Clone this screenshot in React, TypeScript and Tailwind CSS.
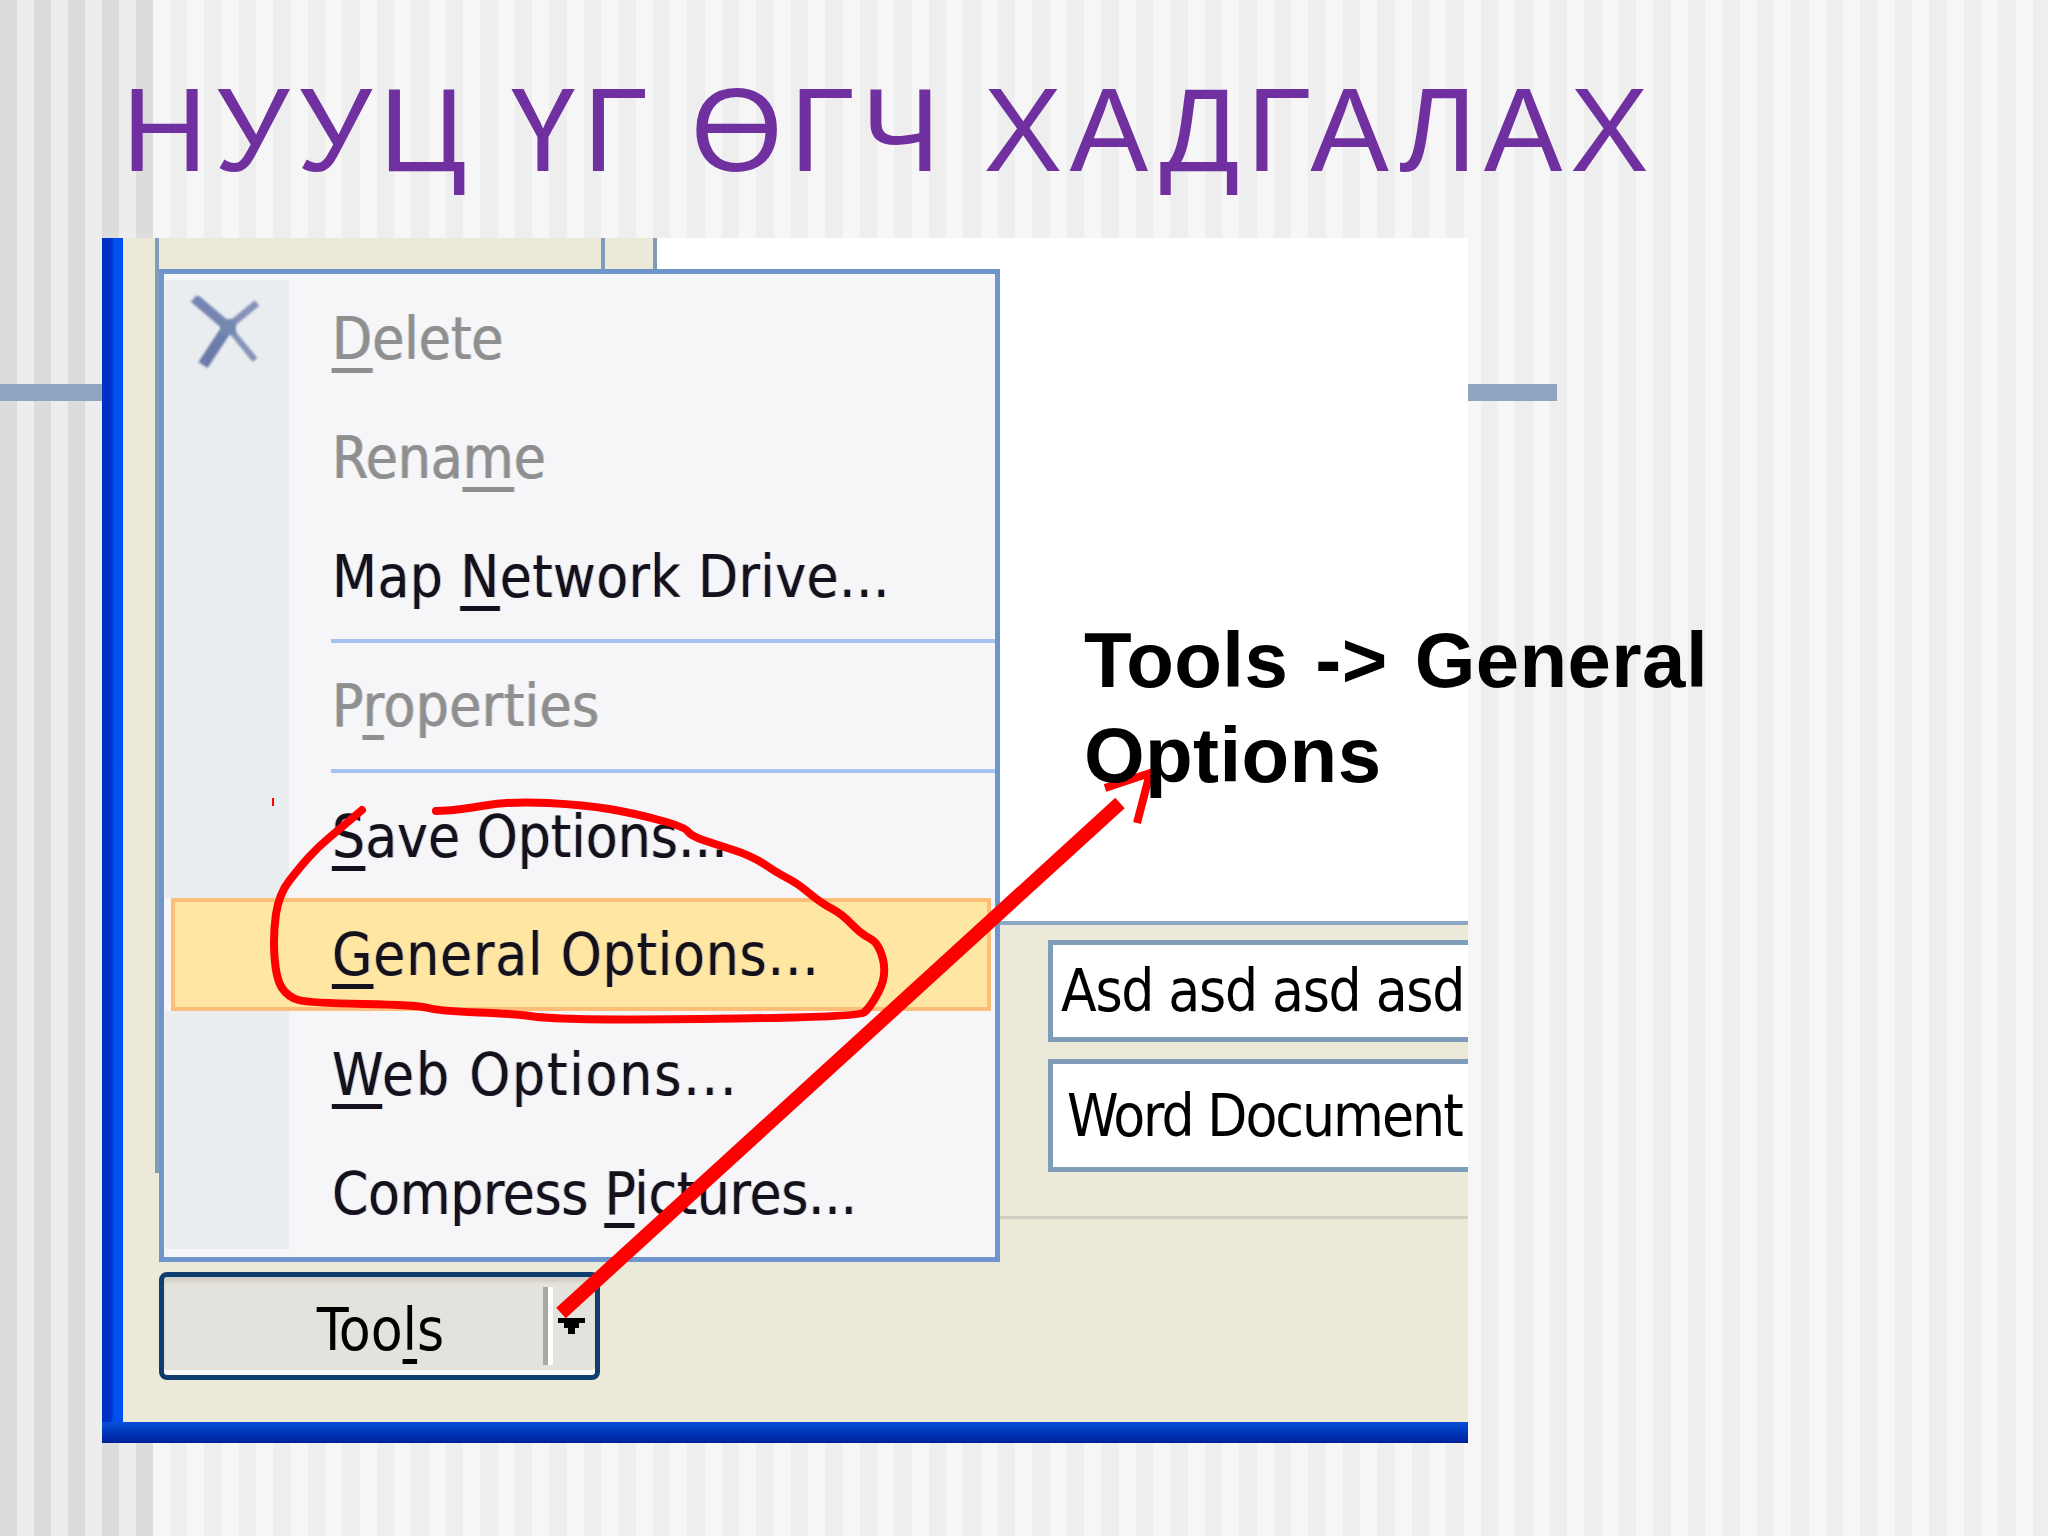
import React from 'react';

const TAHOMA = 'font-["DejaVu_Sans_Condensed","Noto_Sans",sans-serif]';
const FRINGE = '[text-shadow:-1px_0_0_#c08a4a70,1px_0_0_#3a7ac870]';
const ACCESS_KEY = 'underline decoration-[5px] underline-offset-[9px] [text-decoration-skip-ink:none]';

interface MenuRow {
  before: string;
  key_: string;
  after: string;
  height: string;
  tracking?: string;
  disabled?: boolean;
  icon?: boolean;
}

const Label: React.FC<{ row: MenuRow }> = ({ row }) => (
  <span
    className={`${TAHOMA} ${FRINGE} ${row.tracking ?? ''} text-[58px] leading-none whitespace-nowrap ${row.disabled ? 'text-[#8f8f8f]' : 'text-[#14101c]'}`}
  >
    {row.before}
    <span className={ACCESS_KEY}>{row.key_}</span>
    {row.after}
  </span>
);

const DeleteIcon = () => (
  <svg width="72" height="76" viewBox="0 0 72 76" className="mt-[16px] blur-[0.8px]" fill="none">
    <path d="M3 2L37 31" stroke="#7686b2" strokeWidth="10" />
    <path d="M12 69L37 31" stroke="#6b7cab" strokeWidth="11" />
    <path d="M66 7L37 31" stroke="#8693b8" strokeWidth="7" />
    <path d="M64 64L37 31" stroke="#8693b8" strokeWidth="6" />
    <rect x="29" y="23" width="16" height="16" fill="#7488b0" />
  </svg>
);

const Row: React.FC<{ row: MenuRow }> = ({ row }) => (
  <div className={`flex ${row.height}`}>
    <div className="w-[124px] shrink-0 bg-[#e9edf0] flex items-start justify-center">
      {row.icon && <DeleteIcon />}
    </div>
    <div className="flex-1 flex items-center pl-[43px]">
      <Label row={row} />
    </div>
  </div>
);

const Separator = ({ height }: { height: string }) => (
  <div className={`flex ${height}`}>
    <div className="w-[124px] shrink-0 bg-[#e9edf0]" />
    <div className="flex-1 flex items-center pl-[42px]">
      <div className="w-full h-[4px] bg-[#a5c3ef]" />
    </div>
  </div>
);

const Menu = () => (
  <div className="w-[841px] h-[993px] border-[5px] border-[#6f96cc] bg-[#f6f6f8] pt-[6px] pl-[1px]">
    <Row row={{ before: '', key_: 'D', after: 'elete', disabled: true, icon: true, height: 'h-[118px]' }} />
    <Row row={{ before: 'Rena', key_: 'm', after: 'e', disabled: true, height: 'h-[119px]' }} />
    <Row row={{ before: 'Map ', key_: 'N', after: 'etwork Drive...', tracking: 'tracking-[0.4px]', height: 'h-[119px]' }} />
    <Separator height="h-[9px]" />
    <Row row={{ before: 'P', key_: 'r', after: 'operties', tracking: 'tracking-[0.4px]', disabled: true, height: 'h-[121px]' }} />
    <Separator height="h-[9px]" />
    <Row row={{ before: '', key_: 'S', after: 'ave Options...', height: 'h-[123px]' }} />
    <div className="h-[113px] ml-[6px] mr-[4px] border-[4px] border-[#ffbe78] bg-[#ffe6a2] flex items-center pl-[157px]">
      <Label row={{ before: '', key_: 'G', after: 'eneral Options...', tracking: 'tracking-[0.8px]', height: '' }} />
    </div>
    <Row row={{ before: '', key_: 'W', after: 'eb Options...', tracking: 'tracking-[1.8px]', height: 'h-[128px]' }} />
    <Row row={{ before: 'Compress ', key_: 'P', after: 'ictures...', tracking: 'tracking-[-0.35px]', height: 'h-[110px]' }} />
  </div>
);

const ToolsButton = () => (
  <div className="ml-[36px] mt-[10px] w-[441px] h-[108px] rounded-[8px] border-[5px] border-[#0f3d6e] bg-[#e4e2dc] flex items-center shadow-[inset_0_-5px_0_#fafafa,inset_0_5px_3px_#d2d0c8]">
    <div className={`${TAHOMA} flex-1 text-center text-[58px] leading-none text-black pl-[54px] pt-[8px]`}>
      Too<span className={ACCESS_KEY}>l</span>s
    </div>
    <div className="w-[5px] h-[78px] bg-[#aaa8a0]" />
    <div className="w-[5px] h-[78px] bg-white" />
    <div className="w-[42px] flex justify-center pr-[5px]">
      <svg width="27" height="16" viewBox="0 0 27 16">
        <path d="M0 0H27V5H21V10H17V16H10V10H6V5H0Z" fill="#000" />
      </svg>
    </div>
  </div>
);

// hand drawn ring round "General Options", smoothed through the segment midpoints
const RING: [number, number][] = [
  [362, 810], [342, 827], [318, 847], [300, 867], [279, 894], [273, 934], [276, 979], [288, 997],
  [309, 1003], [418, 1005], [439, 1011], [518, 1014], [542, 1018], [615, 1020], [858, 1017], [870, 1008],
  [887, 976], [879, 943], [861, 934], [842, 914], [821, 903], [797, 883], [779, 874], [752, 856],
  [718, 845], [691, 836], [685, 827], [633, 813], [585, 805], [512, 801], [458, 810], [436, 811],
];

const ringPath = () => {
  let d = `M${RING[0][0]} ${RING[0][1]}`;
  for (let i = 1; i < RING.length - 1; i++) {
    const [x, y] = RING[i];
    const [nx, ny] = RING[i + 1];
    d += `Q${x} ${y} ${(x + nx) / 2} ${(y + ny) / 2}`;
  }
  const [lx, ly] = RING[RING.length - 1];
  return `${d}L${lx} ${ly}`;
};

const Annotations = () => (
  <svg
    className="absolute left-0 top-0 pointer-events-none"
    width="2048"
    height="1536"
    viewBox="0 0 2048 1536"
    fill="none"
    stroke="#ff0000"
  >
    <path strokeWidth="8" strokeLinecap="round" d={ringPath()} />
    <path strokeWidth="2" d="M273 798V806" />
    <path strokeWidth="14" d="M561 1313L1120 803" />
    <path strokeWidth="8" d="M1105 788L1150 773L1137 823" />
  </svg>
);

const App = () => (
  <div className="relative w-[2048px] h-[1536px] overflow-hidden bg-no-repeat [background-image:linear-gradient(#8ea4bf,#8ea4bf),repeating-linear-gradient(90deg,#dcdcdc_0,#dcdcdc_17px,#ededed_17px,#ededed_34px),repeating-linear-gradient(90deg,#eeeeef_-2.5px,#eeeeef_14.75px,#f6f6f7_14.75px,#f6f6f7_32px)] [background-size:1557px_17px,153px_100%,100%_100%] [background-position:0_384px,0_0,0_0]">
    <div className='h-[238px] pl-[122px] pt-[64px] font-["Liberation_Sans",Arial,sans-serif] text-[118px] leading-[132px] tracking-[7.4px] [word-spacing:-4px] text-[#7030a0] whitespace-nowrap'>
      НУУЦ ҮГ ӨГЧ ХАДГАЛАХ
    </div>

    <div className="ml-[102px] w-[1366px] h-[1205px] flex flex-col">
      <div className="flex h-[1184px]">
        <div className="w-[21px] bg-gradient-to-r from-[#0030c8] from-40% to-[#0050ee] to-60%" />

        <div className="w-[877px] bg-[#ebe9d8] flex flex-col">
          <div className="h-[31px] bg-white">
            <div className="w-[534px] h-full bg-[#ebe9d8] pl-[32px] flex">
              <div className="w-[446px] border-l-[4px] border-[#7f9db9]" />
              <div className="w-[56px] border-l-[4px] border-r-[4px] border-[#7f9db9]" />
            </div>
          </div>
          <div className="flex pl-[32px]">
            <div className="w-[4px] h-[904px] bg-[#7f9db9]" />
            <Menu />
          </div>
          <ToolsButton />
        </div>

        <div className="w-[468px] flex flex-col">
          <div className='h-[687px] bg-white border-b-[4px] border-[#8ea9c4] pl-[84px] pt-[375px] font-["Liberation_Sans",Arial,sans-serif] font-bold text-[78px] leading-[95px] text-black whitespace-nowrap'>
            <span className="relative z-10 tracking-[0.4px] [word-spacing:5px]">
              Tools -&gt; General
              <br />
              Options
            </span>
          </div>
          <div className="flex-1 bg-[#ebe9d8] pt-[15px] pl-[48px]">
            <div className={`${TAHOMA} h-[102px] border-[5px] border-r-0 border-[#7f9db9] bg-white flex items-center pl-[8px] text-[58px] leading-none tracking-[-1.3px] text-black whitespace-nowrap`}>
              Asd asd asd asd
            </div>
            <div className={`${TAHOMA} mt-[17px] h-[113px] border-[5px] border-r-0 border-[#7f9db9] bg-white flex items-center pl-[14px] text-[58px] leading-none tracking-[-2px] text-black whitespace-nowrap`}>
              Word Document
            </div>
            <div className="mt-[44px] -ml-[48px] h-[3px] bg-[#d0cfc4]" />
          </div>
        </div>
      </div>
      <div className="h-[21px] bg-gradient-to-b from-[#0a4fd8] to-[#001f9a]" />
    </div>

    <Annotations />
  </div>
);

export default App;
